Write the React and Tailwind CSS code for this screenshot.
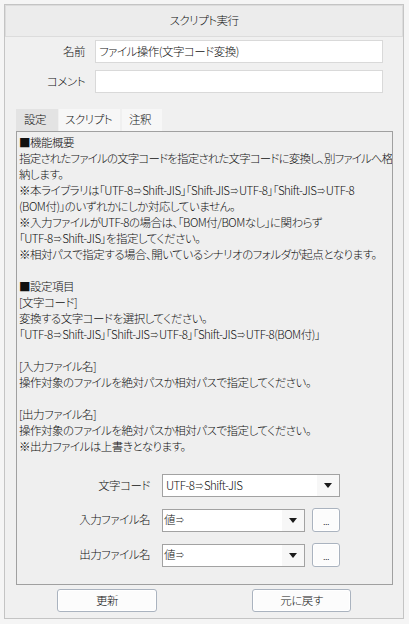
const jpFont = { fontFamily: '"Noto Sans CJK JP", "Noto Sans", sans-serif' };

const lines = [
    '■機能概要',
    '指定されたファイルの文字コードを指定された文字コードに変換し、別ファイルへ格',
    '納します。',
    '※本ライブラリは「UTF-8⇒Shift-JIS」「Shift-JIS⇒UTF-8」「Shift-JIS⇒UTF-8',
    '(BOM付)」のいずれかにしか対応していません。',
    '※入力ファイルがUTF-8の場合は、「BOM付/BOMなし」に関わらず',
    '「UTF-8⇒Shift-JIS」を指定してください。',
    '※相対パスで指定する場合、開いているシナリオのフォルダが起点となります。',
    '',
    '■設定項目',
    '[文字コード]',
    '変換する文字コードを選択してください。',
    '「UTF-8⇒Shift-JIS」「Shift-JIS⇒UTF-8」「Shift-JIS⇒UTF-8(BOM付)」',
    '',
    '[入力ファイル名]',
    '操作対象のファイルを絶対パスか相対パスで指定してください。',
    '',
    '[出力ファイル名]',
    '操作対象のファイルを絶対パスか相対パスで指定してください。',
    '※出力ファイルは上書きとなります。',
];

// the ⇒ glyph is drawn small in the original dialog font
function Txt({ text }) {
    const parts = text.split('⇒');
    return (
        <>
            {parts.map((p, i) => (
                <span key={i}>
                    {p}
                    {i < parts.length - 1 && <span className="text-[8px] px-[1px] align-[1px]">⇒</span>}
                </span>
            ))}
        </>
    );
}

function Arrow() {
    return (
        <svg width="8" height="5" viewBox="0 0 8 5">
            <path d="M0 0 H8 L4 5 Z" fill="#1a1a1a" />
        </svg>
    );
}

function Combo({ value, width }) {
    return (
        <div className={`flex h-[23px] ${width} border border-[#a2a2a2] bg-white`}>
            <div className="flex-1 flex items-center pl-[1px] whitespace-nowrap">{value}</div>
            <div className="w-[22px] flex items-center justify-center bg-[#f7f7f7]">
                <Arrow />
            </div>
        </div>
    );
}

function SmallButton({ children, className }) {
    return (
        <button className={`flex items-center justify-center rounded-[3px] border border-[#aab3bf] bg-[#fcfcfc] shadow-[inset_0_0_0_1px_#ffffff] ${className}`}>
            {children}
        </button>
    );
}

export default function App() {
    return (
        <div
            className="w-[409px] h-[624px] bg-[#f5f5f5] pt-[4px] pl-[4px] pr-[5px] pb-[5px] text-[11.5px] font-light tracking-[-0.5px] text-[#111] [font-feature-settings:'palt']"
            style={jpFont}
        >
            <div className="h-full flex flex-col border border-[#c4c4c4] bg-[#f0f0f0]">
                {/* Title */}
                <div className="h-[32px] flex items-center justify-center border border-[#dcdcdc] bg-[#ececec]">
                    スクリプト実行
                </div>

                {/* Name / comment */}
                <div className="mt-[3px] flex flex-col gap-[7px]">
                    <div className="flex items-center gap-[10px]">
                        <div className="w-[80px] text-right">名前</div>
                        <div className="w-[288px] h-[23px] flex items-center pl-[3px] border border-[#d9d9d9] bg-white">
                            ファイル操作(文字コード変換)
                        </div>
                    </div>
                    <div className="flex items-center gap-[10px]">
                        <div className="w-[80px] text-right">コメント</div>
                        <div className="w-[288px] h-[23px] border border-[#d9d9d9] bg-white"></div>
                    </div>
                </div>

                {/* Tabs */}
                <div className="mt-[16px] ml-[11px] flex h-[22px]">
                    <div className="w-[42px] pl-[8px] flex items-center bg-[#e3e3e3]">設定</div>
                    <div className="ml-[1px] w-[61px] pl-[6px] flex items-center bg-[#f7f7f7]">スクリプト</div>
                    <div className="ml-[2px] w-[40px] pl-[7px] flex items-center bg-[#f7f7f7]">注釈</div>
                </div>

                {/* Panel */}
                <div className="ml-[11px] w-[377px] h-[454px] border border-[#a0a0a0] bg-[#efefef] pt-[2px] pl-[2px] overflow-hidden">
                    <div className="leading-[16px]">
                        {lines.map((line, i) => (
                            <div key={i} className={`h-[16px] whitespace-nowrap ${i === 1 ? 'tracking-[-0.85px]' : ''}`}>
                                <Txt text={line} />
                            </div>
                        ))}
                    </div>

                    <div className="mt-[20px] flex flex-col gap-[11px]">
                        <div className="flex items-center">
                            <div className="w-[131px] text-right">文字コード</div>
                            <div className="ml-[12px]">
                                <Combo value={<span className="pl-[2px]"><Txt text="UTF-8⇒Shift-JIS" /></span>} width="w-[178px]" />
                            </div>
                        </div>
                        <div className="flex items-center">
                            <div className="w-[131px] text-right">入力ファイル名</div>
                            <div className="ml-[12px]">
                                <Combo value={<Txt text="値⇒" />} width="w-[143px]" />
                            </div>
                            <SmallButton className="ml-[7px] w-[28px] h-[24px] text-[10px]">...</SmallButton>
                        </div>
                        <div className="flex items-center">
                            <div className="w-[131px] text-right">出力ファイル名</div>
                            <div className="ml-[12px]">
                                <Combo value={<Txt text="値⇒" />} width="w-[143px]" />
                            </div>
                            <SmallButton className="ml-[7px] w-[28px] h-[24px] text-[10px]">...</SmallButton>
                        </div>
                    </div>
                </div>

                {/* Buttons */}
                <div className="mt-[4px] flex">
                    <SmallButton className="ml-[52px] w-[100px] h-[23px]">更新</SmallButton>
                    <SmallButton className="ml-[95px] w-[99px] h-[23px]">元に戻す</SmallButton>
                </div>
            </div>
        </div>
    );
}
